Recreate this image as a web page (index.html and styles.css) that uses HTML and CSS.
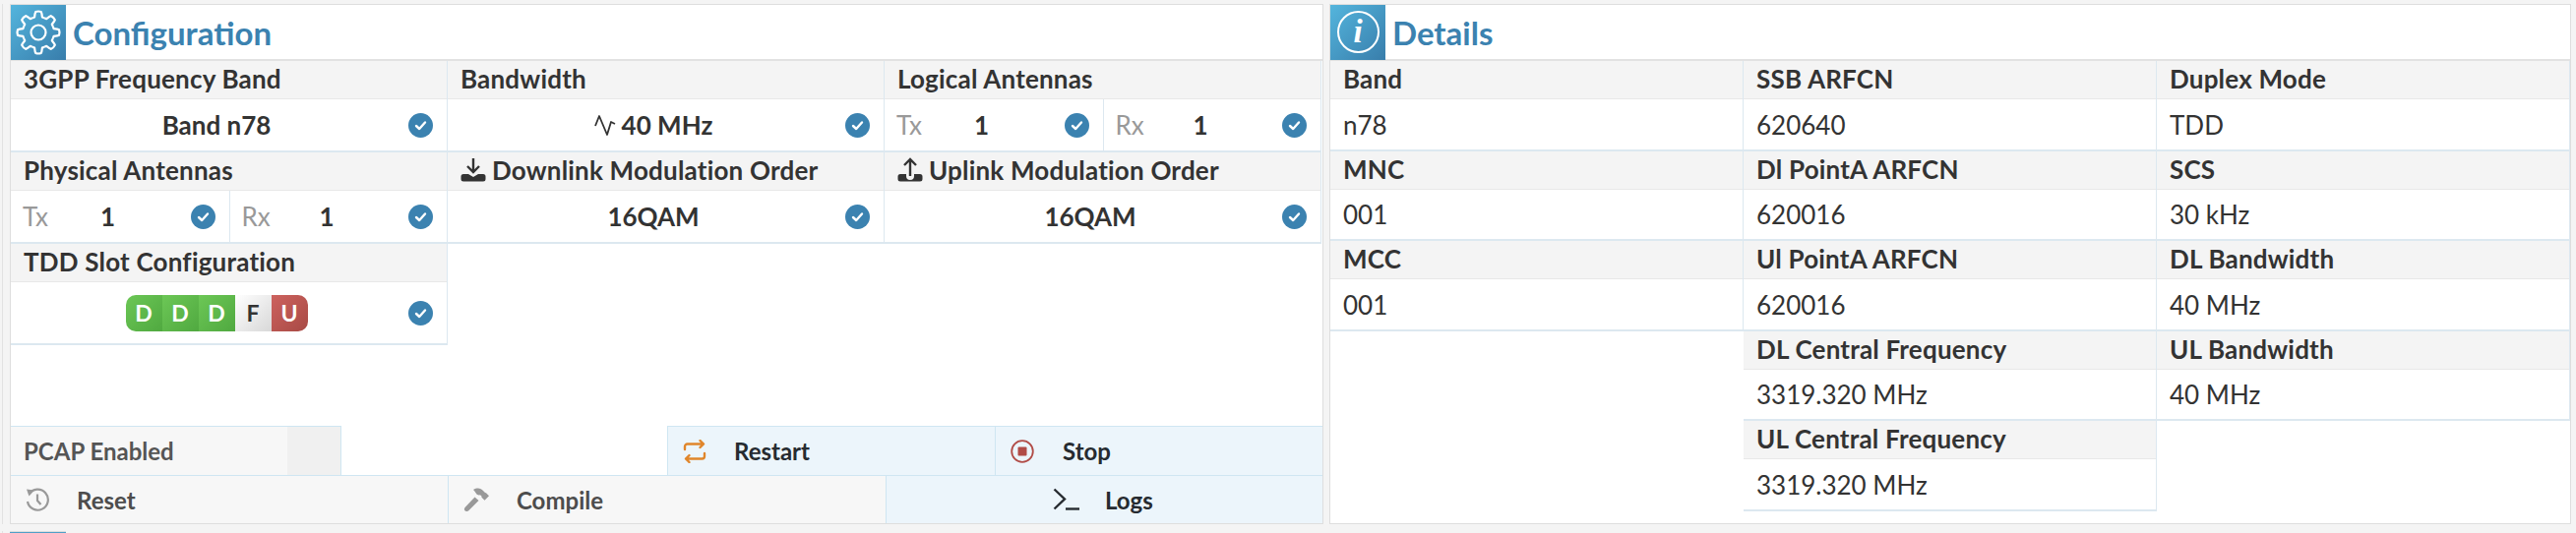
FILE: index.html
```html
<!DOCTYPE html>
<html lang="en">
<head>
  <meta charset="UTF-8">
  <title>Configuration</title>
  <link rel="stylesheet" href="styles.css">
</head>
<body>
  <svg class="defs" width="0" height="0">
    <symbol id="check" viewBox="0 0 25 25">
      <circle cx="12.5" cy="12.5" r="12.5" fill="#3b82b0"/>
      <path d="M8 13l3.2 3L17 9.5" fill="none" stroke="#fff" stroke-width="2.4" stroke-linecap="round" stroke-linejoin="round"/>
    </symbol>
    <path id="tooth" d="M-6.1-14.8L-3.9-15.6Q-3.4-20-2.8-21Q0-22 2.8-21Q3.4-20 3.9-15.6L6.1-14.8"/>
  </svg>

  <div class="page">
    <section class="panel">
      <div class="panel-head">
        <span class="head-icon">
          <svg width="56" height="56" viewBox="-28 -28 56 56">
            <g fill="none" stroke="#fff" stroke-width="2.2" stroke-linejoin="round">
              <use href="#tooth"/>
              <use href="#tooth" transform="rotate(45)"/>
              <use href="#tooth" transform="rotate(90)"/>
              <use href="#tooth" transform="rotate(135)"/>
              <use href="#tooth" transform="rotate(180)"/>
              <use href="#tooth" transform="rotate(225)"/>
              <use href="#tooth" transform="rotate(270)"/>
              <use href="#tooth" transform="rotate(315)"/>
              <circle r="7.5"/>
            </g>
          </svg>
        </span>
        <h2>Configuration</h2>
      </div>

      <div class="config-grid">
        <div class="field">
          <div class="label">3GPP Frequency Band</div>
          <div class="value">Band n78 <svg class="check"><use href="#check"/></svg></div>
        </div>
        <div class="field">
          <div class="label">Bandwidth</div>
          <div class="value">
            <svg class="wave" width="22" height="22" viewBox="0 0 22 22"><path d="M1 12L5 2L13 21L17 8L21 10" fill="none" stroke="#333" stroke-width="1.8" stroke-linejoin="round"/></svg>
            40 MHz <svg class="check"><use href="#check"/></svg>
          </div>
        </div>
        <div class="field">
          <div class="label">Logical Antennas</div>
          <div class="split">
            <div class="value"><span class="dir">Tx</span><span class="num">1</span><svg class="check"><use href="#check"/></svg></div>
            <div class="value"><span class="dir">Rx</span><span class="num">1</span><svg class="check"><use href="#check"/></svg></div>
          </div>
        </div>

        <div class="field">
          <div class="label">Physical Antennas</div>
          <div class="split">
            <div class="value"><span class="dir">Tx</span><span class="num">1</span><svg class="check"><use href="#check"/></svg></div>
            <div class="value"><span class="dir">Rx</span><span class="num">1</span><svg class="check"><use href="#check"/></svg></div>
          </div>
        </div>
        <div class="field">
          <div class="label">
            <svg width="26" height="26" viewBox="0 0 26 26"><path d="M13 1v13M7 9l6 6 6-6" fill="none" stroke="#333" stroke-width="2.4"/><path d="M3 17h5l5 3 5-3h5a2.500 2.500 0 0 1 2.500 2.500v2.500a2.500 2.500 0 0 1-2.500 2.500H3a2.500 2.500 0 0 1-2.500-2.500v-2.500A2.500 2.500 0 0 1 3 17z" fill="#333"/></svg>
            Downlink Modulation Order
          </div>
          <div class="value">16QAM <svg class="check"><use href="#check"/></svg></div>
        </div>
        <div class="field">
          <div class="label">
            <svg width="26" height="26" viewBox="0 0 26 26"><path d="M13 19V3M7 8l6-6 6 6" fill="none" stroke="#333" stroke-width="2.4"/><path d="M3 17h6v2a4 4 0 0 0 8 0v-2h6a2.500 2.500 0 0 1 2.500 2.500v2.500a2.500 2.500 0 0 1-2.500 2.500H3a2.500 2.500 0 0 1-2.500-2.500v-2.500A2.500 2.500 0 0 1 3 17z" fill="#333"/></svg>
            Uplink Modulation Order
          </div>
          <div class="value">16QAM <svg class="check"><use href="#check"/></svg></div>
        </div>

        <div class="field">
          <div class="label">TDD Slot Configuration</div>
          <div class="value tall">
            <div class="slots">
              <span class="slot down">D</span><span class="slot down">D</span><span class="slot down">D</span><span class="slot flex">F</span><span class="slot up">U</span>
            </div>
            <svg class="check"><use href="#check"/></svg>
          </div>
        </div>
      </div>

      <div class="actions">
        <div class="action-row">
          <div class="pcap">PCAP Enabled<span class="toggle"></span></div>
          <div class="gap"></div>
          <div class="btn primary restart">
            <svg width="24" height="24" viewBox="0 0 24 24" fill="none" stroke="#e0862b" stroke-width="2.400" stroke-linecap="round" stroke-linejoin="round"><path d="M2 10V7a2.500 2.500 0 0 1 2.500-2.500H21M17.500 1L21 4.500 17.500 8M22 14v3a2.500 2.500 0 0 1-2.500 2.500H3M6.500 16L3 19.500 6.500 23"/></svg>
            <span>Restart</span>
          </div>
          <div class="btn primary stop">
            <svg width="24" height="24" viewBox="0 0 24 24"><circle cx="12" cy="12" r="10.800" fill="none" stroke="#b14c47" stroke-width="1.800"/><rect x="7.500" y="7.500" width="9" height="9" rx="1" fill="#b14c47"/></svg>
            <span>Stop</span>
          </div>
        </div>
        <div class="action-row">
          <div class="btn reset">
            <svg width="24" height="24" viewBox="0 0 24 24" fill="none" stroke="#999" stroke-width="2.200"><path d="M3.500 6.500A10.500 10.500 0 1 1 2 14M12 6.500V13l3.500 4"/><path d="M1 1.500l8 1-5.500 6z" fill="#999" stroke="none"/></svg>
            <span>Reset</span>
          </div>
          <div class="btn compile">
            <svg width="27" height="24" viewBox="0 0 27 24" fill="#999"><path d="M10 2c4-2.500 8-1.500 10 1l2 2 1 .2 3 3-4.500 4.500-3-3-.2-1.500-1.500-1c-1.500.5-3 0-3.500-1C12 4.500 11 3 10 2z"/><path d="M11.500 9.500l4 3.500L5 23.500c-1.500 1-3.500.5-4-1-.3-1 0-2 .8-2.800z"/></svg>
            <span>Compile</span>
          </div>
          <div class="btn primary logs">
            <svg width="27" height="24" viewBox="0 0 27 24" fill="none" stroke="#262b30" stroke-width="2.400"><path d="M1.500 1.500L12 11.500 1.500 21.500"/><path d="M13 21.500h14"/></svg>
            <span>Logs</span>
          </div>
        </div>
      </div>
    </section>

    <section class="panel">
      <div class="panel-head">
        <span class="head-icon"><span class="info">i</span></span>
        <h2>Details</h2>
      </div>

      <div class="detail-cols">
        <div class="detail-col">
          <div class="item"><div class="label">Band</div><div class="text">n78</div></div>
          <div class="item"><div class="label">MNC</div><div class="text">001</div></div>
          <div class="item"><div class="label">MCC</div><div class="text">001</div></div>
        </div>
        <div class="detail-col">
          <div class="item"><div class="label">SSB ARFCN</div><div class="text">620640</div></div>
          <div class="item"><div class="label">Dl PointA ARFCN</div><div class="text">620016</div></div>
          <div class="item"><div class="label">Ul PointA ARFCN</div><div class="text">620016</div></div>
          <div class="item"><div class="label">DL Central Frequency</div><div class="text">3319.320 MHz</div></div>
          <div class="item"><div class="label">UL Central Frequency</div><div class="text">3319.320 MHz</div></div>
        </div>
        <div class="detail-col">
          <div class="item"><div class="label">Duplex Mode</div><div class="text">TDD</div></div>
          <div class="item"><div class="label">SCS</div><div class="text">30 kHz</div></div>
          <div class="item"><div class="label">DL Bandwidth</div><div class="text">40 MHz</div></div>
          <div class="item"><div class="label">UL Bandwidth</div><div class="text">40 MHz</div></div>
        </div>
      </div>
    </section>
  </div>

  <div class="next-panel"><span class="next-tab"></span></div>
</body>
</html>
```

FILE: styles.css
```css
* { box-sizing: border-box; }
html, body { margin: 0; height: 100%; overflow: hidden; }
body { font-family: Lato, sans-serif; font-size: 26px; color: #333; background: #f4f4f4; padding-left: 2px; }
.defs { position: absolute; }

.page { display: flex; gap: 6px; height: 529px; margin-top: 4px; padding: 0 5px 0 7px; border-left: 1px solid #e2e2e2; }
.panel { position: relative; display: flex; flex-direction: column; flex: 0 0 1335px; background: #fff; border: 1px solid #dedede; }
.panel + .panel { flex: 0 0 1262px; }

.panel-head { display: flex; align-items: center; height: 57px; border-bottom: 2px solid #e2e2e2; }
.head-icon { display: flex; align-items: center; justify-content: center; width: 56px; height: 56px; background: linear-gradient(135deg, #54b5dd, #387dab); }
.panel-head h2 { margin: 0 0 0 7px; font-size: 33px; font-weight: 700; color: #3b82b0; }
.info { display: flex; align-items: center; justify-content: center; width: 43px; height: 43px; border: 2px solid #fff; border-radius: 50%; font: italic bold 33px "Liberation Serif", serif; color: #fff; }

.config-grid { display: grid; grid-template-columns: repeat(3, 444px); grid-auto-rows: min-content; }
.field { border-right: 1px solid #dce8f0; border-bottom: 2px solid #dce8f0; }
.label { display: flex; align-items: center; gap: 6px; height: 39px; padding: 0 0 2px 13px; background: #f4f4f4; border-bottom: 1px solid #e8e8e8; font-weight: 700; letter-spacing: .2px; white-space: nowrap; }
.value { position: relative; display: flex; align-items: center; justify-content: center; gap: 6px; flex: 1; height: 52px; padding-right: 25px; font-weight: 700; }
.value.tall { height: 62px; }
.check { position: absolute; right: 14px; top: 50%; width: 25px; height: 25px; margin-top: -12.5px; }
.wave { flex: none; }
.split { display: flex; }
.split .value { justify-content: flex-start; flex: 0 0 50%; padding: 0 0 0 12px; }
.split .value + .value { border-left: 1px solid #dce8f0; }
.dir { width: 73px; font-weight: 400; color: #999; }

.slots { display: flex; border-radius: 10px; overflow: hidden; }
.slot { display: flex; align-items: center; justify-content: center; width: 37px; height: 37px; font-size: 23px; font-weight: 700; color: #fff; }
.slot.down { background: linear-gradient(135deg, #6cc756, #50a940); }
.slot.flex { background: linear-gradient(135deg, #fff, #d8d8d8); color: #333; }
.slot.up { background: linear-gradient(135deg, #cd625e, #a84a45); }

.actions { margin-top: auto; }
.action-row { display: flex; height: 50px; }
.action-row + .action-row { height: 49px; border-top: 1px solid #cfe6f2; }
.pcap { display: flex; align-items: center; flex: 0 0 336px; padding-left: 13px; background: #f7f7f7; border-top: 1px solid #cfe6f2; border-right: 1px solid #cfe6f2; font-size: 24px; font-weight: 700; color: #555; position: relative; }
.toggle { position: absolute; top: 0; right: 0; bottom: 0; width: 54px; background: #f0f0f0; }
.gap { flex: 0 0 331px; }
.btn { display: flex; align-items: center; background: #f7f7f7; font-size: 24px; font-weight: 700; color: #4d4d4d; }
.btn.primary { background: #ecf5fb; color: #262b30; }
.restart, .stop { border-top: 1px solid #cfe6f2; }
.restart { flex: 0 0 333px; padding-left: 15px; gap: 28px; border-left: 1px solid #cfe6f2; }
.stop { flex: 1; padding-left: 15px; gap: 29px; border-left: 1px solid #cfe6f2; }
.reset { flex: 0 0 444px; padding-left: 15px; gap: 28px; }
.compile { flex: 0 0 445px; padding-left: 15px; gap: 27px; border-left: 1px solid #cfe6f2; }
.logs { flex: 1; padding-left: 169px; gap: 26px; border-left: 1px solid #cfe6f2; }

.detail-cols { display: grid; grid-template-columns: repeat(3, 420px); }
.item { height: 91.500px; border-right: 1px solid #dce8f0; border-bottom: 2px solid #dce8f0; }
.text { display: flex; align-items: center; height: 51px; padding-left: 13px; }

.next-panel { height: 6px; margin: 7px 0 0; padding-left: 7px; border-left: 1px solid #e2e2e2; }
.next-tab { display: block; height: 100%; background: #4f9fc8; border-top: 1px solid #ddd; width: 57px; }
```
